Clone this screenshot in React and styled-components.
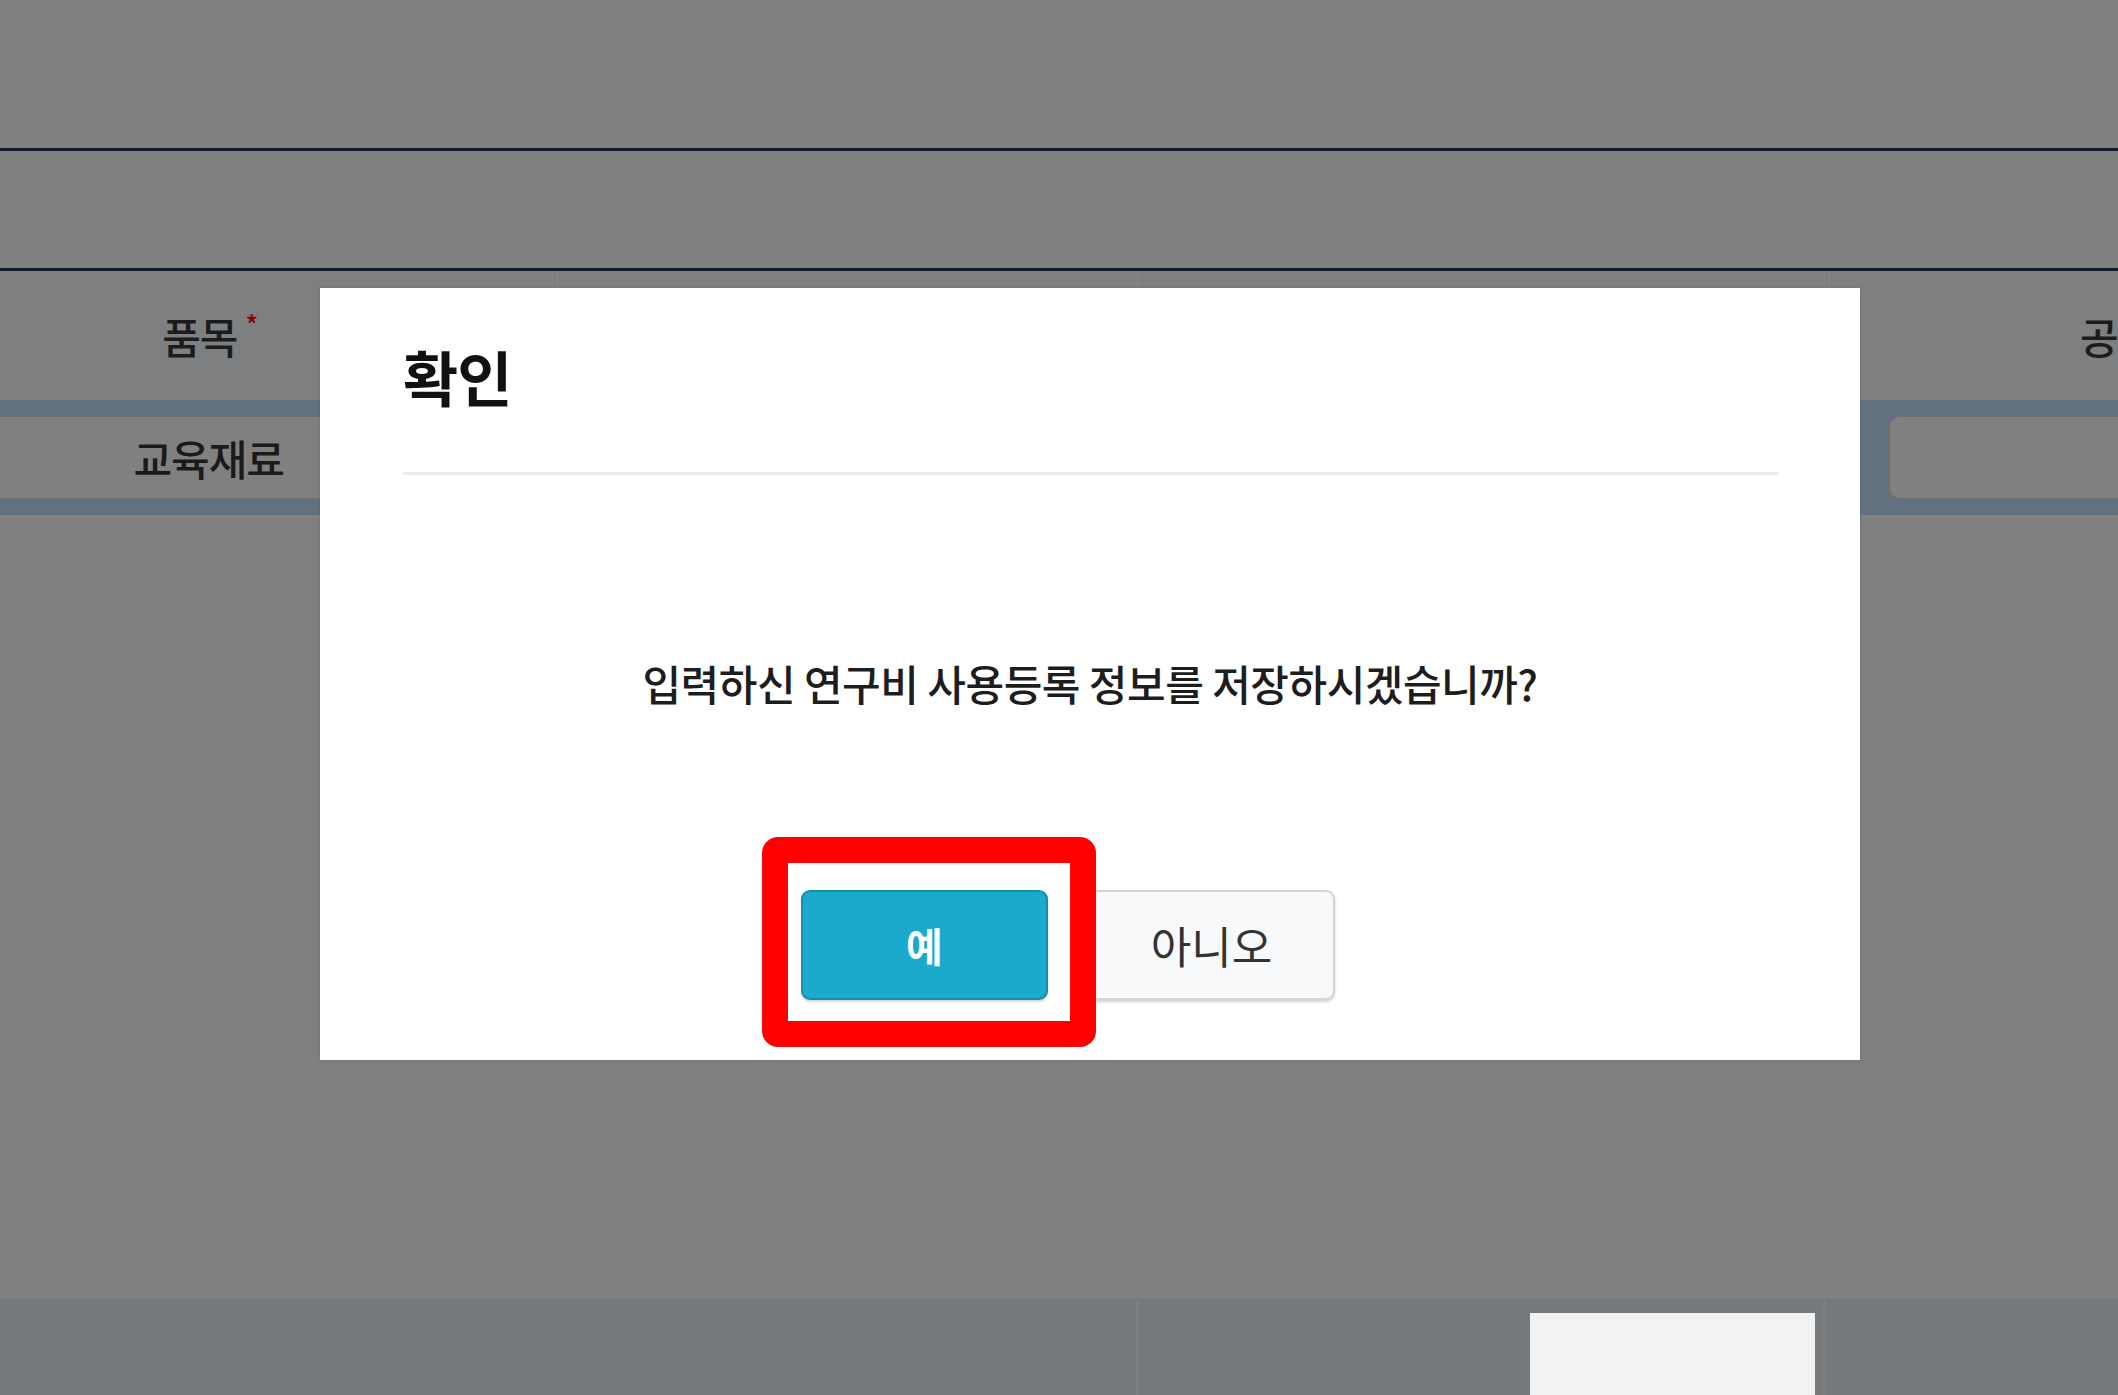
import React from 'react'
import styled, { createGlobalStyle } from 'styled-components'

const GlobalStyle = createGlobalStyle`
  html, body {
    margin: 0;
    padding: 0;
    background: #808080;
  }
  body {
    font-family: "Noto Sans CJK KR", "Noto Sans", sans-serif;
  }
  * {
    box-sizing: border-box;
  }
`

const Page = styled.div`
  position: relative;
  width: 2118px;
  height: 1395px;
  overflow: hidden;
  display: flex;
  flex-direction: column;
  background: #808080;
`

const Spacer = styled.div`
  height: ${props => props.h}px;
  flex-shrink: 0;
`

const Rule = styled.div`
  height: 3px;
  flex-shrink: 0;
  background: #121a2c;
`

const HeaderRow = styled.div`
  height: 129px;
  flex-shrink: 0;
  display: grid;
  grid-template-columns: 558px 580px 692px 1fr;
  background: #7e7f80;
`

const HeaderCell = styled.div`
  display: flex;
  align-items: center;
  justify-content: ${props => (props.start ? 'flex-start' : 'flex-end')};
  padding: ${props => (props.start ? '0 0 0 250px' : '0')};
  border-right: 1px solid #858687;
  font-size: 42px;
  font-weight: 500;
  color: #1c1c1c;
  letter-spacing: -1px;

  &:last-child {
    border-right: none;
  }
`

const LabelText = styled.span`
  margin-right: ${props => props.mr || 0}px;
  display: inline-flex;
  align-items: flex-start;
`

const Required = styled.span`
  color: #8a0000;
  font-size: 26px;
  line-height: 1;
  margin-left: 8px;
  margin-top: 6px;
`

const InputRow = styled.div`
  height: 115px;
  flex-shrink: 0;
  display: flex;
  align-items: center;
  justify-content: space-between;
  padding: 14px 0;
  background: #637080;
`

const FieldBox = styled.div`
  height: 85px;
  width: ${props => props.w}px;
  margin: ${props => props.m};
  display: flex;
  align-items: center;
  justify-content: flex-end;
  padding-right: ${props => props.pr || 0}px;
  background: #808080;
  border: 2px solid #6f6f70;
  border-radius: 12px;
  font-size: 42px;
  font-weight: 500;
  color: #1a1a1a;
  letter-spacing: -1px;
`

const Filler = styled.div`
  flex: 1;
`

const Footer = styled.div`
  height: 96px;
  flex-shrink: 0;
  display: grid;
  grid-template-columns: 1139px 687px 1fr;
  background: #75797c;
`

const FooterCell = styled.div`
  display: flex;
  justify-content: flex-end;
  padding: 14px 8px 0 0;
  border-right: 3px solid #7c7e80;

  &:last-child {
    border-right: none;
  }
`

const FooterBox = styled.div`
  width: 285px;
  height: 100%;
  background: #f2f2f2;
`

const Modal = styled.div`
  position: absolute;
  top: 288px;
  left: 320px;
  width: 1540px;
  height: 772px;
  display: flex;
  flex-direction: column;
  background: #ffffff;
  box-shadow: 0 0 3px rgba(0, 0, 0, 0.15);
`

const ModalHeader = styled.div`
  padding: 50px 82px 0 83px;
`

const ModalTitle = styled.h2`
  margin: 0;
  font-size: 60px;
  line-height: 76px;
  font-weight: 700;
  color: #111111;
  letter-spacing: -1px;
`

const Divider = styled.div`
  margin-top: 58px;
  height: 3px;
  background: #e9ecef;
`

const ModalBody = styled.div`
  flex: 1;
  display: flex;
  flex-direction: column;
  align-items: center;
  padding-bottom: 60px;
`

const Message = styled.p`
  margin: 178px 0 0 0;
  font-size: 42px;
  line-height: 60px;
  font-weight: 500;
  color: #1d1d1d;
  letter-spacing: -0.5px;
`

const ButtonRow = styled.div`
  margin-top: auto;
  display: flex;
  gap: 40px;
  padding-right: 44px;
`

const Highlight = styled.div`
  position: relative;
`

const Annotation = styled.div`
  position: absolute;
  left: -39px;
  top: -53px;
  width: 334px;
  height: 210px;
  border: 26px solid #ff0000;
  border-radius: 16px;
  pointer-events: none;
`

const Button = styled.button`
  width: 247px;
  height: 110px;
  display: flex;
  align-items: center;
  justify-content: center;
  border-radius: 9px;
  font-family: inherit;
  font-size: ${props => (props.primary ? 40 : 44)}px;
  font-weight: ${props => (props.primary ? 700 : 400)};
  color: ${props => (props.primary ? '#ffffff' : '#333333')};
  background: ${props => (props.primary ? '#1ba9cc' : '#f8f9fa')};
  border: 2px solid ${props => (props.primary ? '#168ea9' : '#d4d4d4')};
  box-shadow: ${props => (props.primary ? '0 2px 2px rgba(0,0,0,0.15)' : '0 2px 3px rgba(0,0,0,0.18)')};
  cursor: pointer;
`

export default function App () {
  return (
    <>
      <GlobalStyle />
      <Page>
        <Spacer h={148} />
        <Rule />
        <Spacer h={117} />
        <Rule />
        <HeaderRow>
          <HeaderCell>
            <LabelText mr={300}>
              품목<Required>*</Required>
            </LabelText>
          </HeaderCell>
          <HeaderCell />
          <HeaderCell />
          <HeaderCell start>공</HeaderCell>
        </HeaderRow>
        <InputRow>
          <FieldBox w={360} m="0 0 0 -20px" pr={54}>교육재료</FieldBox>
          <Filler />
          <FieldBox w={260} m="0 -30px 0 0" />
        </InputRow>
        <Filler />
        <Footer>
          <FooterCell />
          <FooterCell>
            <FooterBox />
          </FooterCell>
          <FooterCell />
        </Footer>

        <Modal role="dialog" aria-labelledby="confirm-title">
          <ModalHeader>
            <ModalTitle id="confirm-title">확인</ModalTitle>
            <Divider />
          </ModalHeader>
          <ModalBody>
            <Message>입력하신 연구비 사용등록 정보를 저장하시겠습니까?</Message>
            <ButtonRow>
              <Highlight>
                <Button primary>예</Button>
                <Annotation />
              </Highlight>
              <Button>아니오</Button>
            </ButtonRow>
          </ModalBody>
        </Modal>
      </Page>
    </>
  )
}
